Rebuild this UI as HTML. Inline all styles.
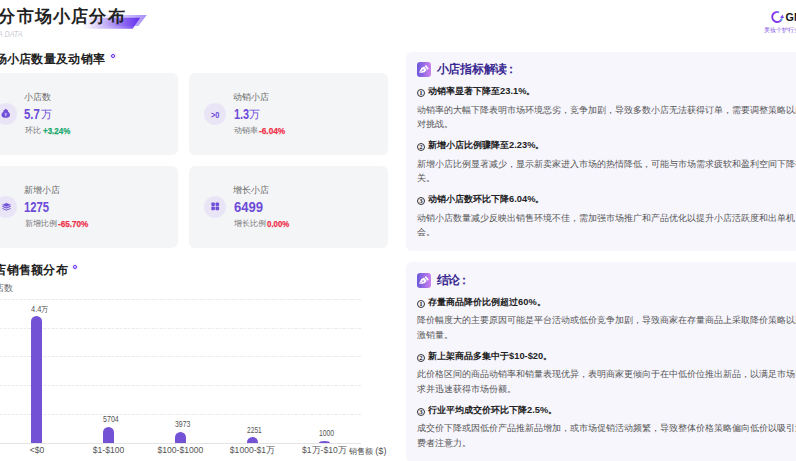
<!DOCTYPE html>
<html><head><meta charset="utf-8">
<style>
*{margin:0;padding:0;box-sizing:border-box}
html,body{width:796px;height:461px;overflow:hidden;background:#fff;font-family:"Liberation Sans",sans-serif;color:#333}
.a{position:absolute;white-space:nowrap;line-height:1}
.sx{display:inline-block;transform-origin:0 0}
.title{left:-19.8px;top:9px;font-size:16.6px;letter-spacing:1.2px;font-weight:bold;color:#222}
.h2{font-size:12px;letter-spacing:.3px;font-weight:bold;color:#222}
.ring{position:absolute;width:4.6px;height:4.6px;border:1.6px solid #5a22f5;border-radius:50%;box-shadow:0 0 2.5px rgba(90,34,245,.35)}
.card{position:absolute;width:198.4px;height:82.4px;background:#f4f5f7;border-radius:6px}
.ic{position:absolute;left:14.8px;top:29.9px;width:22.2px;height:22.2px;border-radius:50%;background:#e9e5f7}
.ic svg{position:absolute;left:0;top:0}
.lbl{position:absolute;left:44.2px;top:19.9px;font-size:9px;color:#666;line-height:1;white-space:nowrap}
.num{position:absolute;left:44.3px;top:33.4px;font-size:15.2px;font-weight:bold;color:#6c4bd8;line-height:1;white-space:nowrap}
.wan{position:absolute;top:35.8px;font-size:10.6px;color:#6c4bd8;line-height:1}
.cmp{position:absolute;left:44.7px;top:54px;font-size:8.2px;color:#777;line-height:1;white-space:nowrap}
.pct{position:absolute;top:53.4px;font-size:9.6px;font-weight:bold;-webkit-text-stroke:.25px currentColor;line-height:1;white-space:nowrap}
.green{color:#17a86c}.red{color:#f0304a}
.panel{position:absolute;left:406px;width:420px;background:#f7f6fd;border-radius:6px}
.pic{position:absolute;left:11px;width:14.3px;height:14.3px;border-radius:3.2px;background:linear-gradient(90deg,#6a58dc,#cc80f0)}
.ptitle{position:absolute;left:30.8px;font-size:11.5px;letter-spacing:-.3px;font-weight:bold;color:#3a2890;line-height:1;white-space:nowrap}
.hd{position:absolute;left:10.8px;padding-left:11.3px;font-size:9.3px;font-weight:bold;color:#222;line-height:1;white-space:nowrap}
.cn{position:absolute;left:.1px;top:1.5px;width:8.3px;height:8.3px;border:.85px solid #333;border-radius:50%;font-family:"Liberation Serif",serif;font-weight:bold;font-size:6.8px;line-height:6.6px;text-align:center;color:#222}
.bd{position:absolute;left:10.8px;width:390px;font-size:9px;color:#555;line-height:14.6px}
.grid{position:absolute;left:0;width:360.5px;height:1px;background:repeating-linear-gradient(90deg,#ebebeb 0 1.8px,transparent 1.8px 2.67px)}
.bar{position:absolute;width:10.9px;background:#7352d6;border-radius:5.45px 5.45px 0 0}
.bl{position:absolute;font-size:8.3px;color:#555;line-height:1;white-space:nowrap}
.xl{position:absolute;font-size:8.6px;color:#555;line-height:1;white-space:nowrap;text-align:center;width:80px}
</style></head><body>

<!-- header -->
<svg class="a" style="left:80px;top:13px" width="70" height="18" viewBox="0 0 70 18">
  <defs><linearGradient id="g1" x1="0" x2="1" y1="0" y2="0"><stop offset="0" stop-color="#7a4ef0" stop-opacity="0"/><stop offset=".55" stop-color="#7a4ef0" stop-opacity=".55"/><stop offset="1" stop-color="#6530ee"/></linearGradient>
  <linearGradient id="g1b" x1="0" x2="1" y1="0" y2="0"><stop offset="0" stop-color="#a58cf4" stop-opacity="0"/><stop offset=".5" stop-color="#a58cf4" stop-opacity=".5"/><stop offset="1" stop-color="#a78ef6"/></linearGradient></defs>
  <polygon points="20,1.9 66.8,1.9 58.3,12.9 20,12.9" fill="url(#g1b)"/>
  <polygon points="2.4,4.7 60.2,4.7 52.7,15.7 2.4,15.7" fill="url(#g1)"/>
</svg>
<div class="a title">细分市场小店分布</div>
<div class="a" style="left:-2.5px;top:29.9px;font-size:8.5px;font-style:italic;color:#cbcbd4"><span class="sx" style="transform:scaleX(.84)">A DATA</span></div>

<!-- logo -->
<svg class="a" style="left:770px;top:10px" width="15" height="15" viewBox="0 0 15 15">
  <defs><linearGradient id="g2" gradientUnits="userSpaceOnUse" x1="12" y1="9" x2="3" y2="12"><stop offset="0" stop-color="#4fb4f2"/><stop offset=".3" stop-color="#8a3cf0"/><stop offset="1" stop-color="#7a34e6"/></linearGradient></defs>
  <path d="M9.2 2.3 A5.05 5.05 0 1 0 12.1 8.3" fill="none" stroke="url(#g2)" stroke-width="1.9"/>
  <polygon points="10.1,7.9 14,7.9 12.4,4.4" fill="#7a48ee"/>
</svg>
<div class="a" style="left:785.5px;top:12.3px;font-size:10.8px;font-weight:bold;color:#111">GMV</div>
<div class="a" style="left:763.8px;top:27.4px;font-size:6.2px;color:#7a46e2">美妆个护行业</div>

<!-- section 1 -->
<div class="a h2" style="left:-5.5px;top:53px">场小店数量及动销率</div>
<div class="ring" style="left:110.7px;top:53.8px"></div>

<div class="card" style="left:-20.2px;top:72.8px">
  <div class="ic"><svg style="left:-.5px;top:-.9px" width="22.2" height="22.2" viewBox="0 0 22 22"><circle cx="11.65" cy="7.5" r=".9" fill="#7050d8"/><path d="M9.3 8.3 Q11.65 7 14 8.3 L13.9 9.7 C15.6 10.6 16 12.1 15.8 13.4 C15.6 15.1 13.9 15.7 11.65 15.7 C9.4 15.7 7.7 15.1 7.5 13.4 C7.3 12.1 7.7 10.6 9.4 9.7 Z" fill="#7050d8"/><path d="M10.7 10.8 L11.65 12.2 L12.6 10.8 M11.65 12.2 V14.3 M10.8 12.7 H12.5" stroke="#d9d0f5" stroke-width=".75" fill="none"/></svg></div>
  <div class="lbl">小店数</div>
  <div class="num"><span class="sx" style="transform:scaleX(.75)">5.7</span></div>
  <div class="wan" style="left:61.6px">万</div>
  <div class="cmp">环比</div>
  <div class="pct green" style="left:62.7px"><span class="sx" style="transform:scaleX(.83)">+3.24%</span></div>
</div>

<div class="card" style="left:189.3px;top:72.8px">
  <div class="ic"><div style="position:absolute;left:6.6px;top:7.1px;font-size:9.5px;font-weight:bold;color:#6c4bd8;line-height:1;transform:scaleX(.78);transform-origin:0 0">&gt;0</div></div>
  <div class="lbl">动销小店</div>
  <div class="num"><span class="sx" style="transform:scaleX(.72)">1.3</span></div>
  <div class="wan" style="left:60.2px">万</div>
  <div class="cmp">动销率</div>
  <div class="pct red" style="left:69.8px"><span class="sx" style="transform:scaleX(.86)">-6.04%</span></div>
</div>

<div class="card" style="left:-20.2px;top:165.8px">
  <div class="ic"><svg width="22.2" height="22.2" viewBox="0 0 22 22"><path d="M7.3 8.8 L11.4 7.1 L15.5 8.8 L11.4 10.4 Z" fill="#7050d8" stroke="#7050d8" stroke-width=".4" stroke-linejoin="round"/><path d="M7.7 10.4 L11.4 11.9 L15.1 10.4 M7.7 12.5 L11.4 14 L15.1 12.5" stroke="#7050d8" stroke-width="1" fill="none" stroke-linecap="round" stroke-linejoin="round"/></svg></div>
  <div class="lbl">新增小店</div>
  <div class="num"><span class="sx" style="transform:scaleX(.74)">1275</span></div>
  <div class="cmp">新增比例</div>
  <div class="pct red" style="left:78.4px"><span class="sx" style="transform:scaleX(.85)">-65.70%</span></div>
</div>

<div class="card" style="left:189.3px;top:165.8px">
  <div class="ic"><svg width="22" height="22" viewBox="0 0 22 22"><rect x="7.3" y="6.4" width="3.6" height="3.6" rx="1" fill="#7050d8"/><rect x="11.5" y="6.4" width="3.6" height="3.6" rx="1" fill="#7050d8"/><rect x="7.3" y="10.6" width="3.6" height="3.6" rx="1" fill="#7050d8"/><rect x="11.5" y="10.6" width="3.6" height="3.6" rx="1" fill="#7050d8"/></svg></div>
  <div class="lbl">增长小店</div>
  <div class="num"><span class="sx" style="transform:scaleX(.86)">6499</span></div>
  <div class="cmp">增长比例</div>
  <div class="pct red" style="left:78.1px"><span class="sx" style="transform:scaleX(.82)">0.00%</span></div>
</div>

<!-- section 2 chart -->
<div class="a h2" style="left:-18px;top:264px">小店销售额分布</div>
<div class="ring" style="left:72.7px;top:264.7px"></div>
<div class="a" style="left:-13.6px;top:284.2px;font-size:8.7px;color:#666">小店数</div>

<div class="grid" style="top:299px"></div>
<div class="grid" style="top:327.7px"></div>
<div class="grid" style="top:356.4px"></div>
<div class="grid" style="top:385.1px"></div>
<div class="grid" style="top:413.8px"></div>
<div class="a" style="left:0;top:443px;width:360.5px;height:1px;background:#e4e4e4"></div>

<div class="bar" style="left:31.1px;top:316px;height:127px"></div>
<div class="bar" style="left:103.1px;top:427px;height:16px"></div>
<div class="bar" style="left:175px;top:432px;height:11px"></div>
<div class="bar" style="left:247.2px;top:437px;height:6px"></div>
<div class="bar" style="left:318.9px;top:441px;height:2px;border-radius:5.45px 5.45px 0 0/2px 2px 0 0"></div>

<div class="bl" style="left:31px;top:304.6px"><span class="sx" style="transform:scaleX(.9)">4.4万</span></div>
<div class="bl" style="left:102.8px;top:415.4px"><span class="sx" style="transform:scaleX(.856)">5704</span></div>
<div class="bl" style="left:175px;top:420.1px"><span class="sx" style="transform:scaleX(.83)">3973</span></div>
<div class="bl" style="left:247.2px;top:425.8px"><span class="sx" style="transform:scaleX(.8)">2251</span></div>
<div class="bl" style="left:318.6px;top:429.3px"><span class="sx" style="transform:scaleX(.82)">1000</span></div>

<div class="xl" style="left:-3px;top:446px">&lt;$0</div>
<div class="xl" style="left:68.6px;top:446px">$1-$100</div>
<div class="xl" style="left:140.4px;top:446px">$100-$1000</div>
<div class="xl" style="left:212.5px;top:446px">$1000-$1万</div>
<div class="xl" style="left:284.4px;top:446px">$1万-$10万</div>
<div class="a" style="left:349px;top:446.6px;font-size:8.1px;color:#555">销售额 <span style="font-size:9.2px">($)</span></div>

<!-- panel 1 -->
<div class="panel" style="top:52px;height:198.7px">
  <div class="pic" style="top:10.4px"><svg width="14.3" height="14.3" viewBox="0 0 14 14"><g transform="translate(-1.1 .9) rotate(54 7 7) translate(7 7) scale(.9) translate(-7 -7)"><rect x="4.5" y="1.1" width="5" height="1.8" rx=".3" fill="#fff"/><path d="M4.6 3.8 H9.4 L9.9 7.2 Q8.6 9.8 7 12.6 Q5.4 9.8 4.1 7.2 Z" fill="#fff"/><circle cx="7" cy="6.9" r=".85" fill="#9a6ce6"/><path d="M7 7.6 V12.8" stroke="#9a6ce6" stroke-width=".55"/></g></svg></div>
  <div class="ptitle" style="top:11.6px">小店指标解读<span style="margin-left:-1.8px">：</span></div>
  <div class="hd" style="top:35px"><span class="cn">1</span>动销率显著下降至23.1%。</div>
  <div class="bd" style="top:50.5px">动销率的大幅下降表明市场环境恶劣，竞争加剧，导致多数小店无法获得订单，需要调整策略以应对挑战。</div>
  <div class="hd" style="top:89px"><span class="cn">2</span>新增小店比例骤降至2.23%。</div>
  <div class="bd" style="top:104.5px">新增小店比例显著减少，显示新卖家进入市场的热情降低，可能与市场需求疲软和盈利空间下降有关。</div>
  <div class="hd" style="top:143px"><span class="cn">3</span>动销小店数环比下降6.04%。</div>
  <div class="bd" style="top:158.5px">动销小店数量减少反映出销售环境不佳，需加强市场推广和产品优化以提升小店活跃度和出单机会。</div>
</div>

<!-- panel 2 -->
<div class="panel" style="top:262.2px;height:200px">
  <div class="pic" style="top:11.1px"><svg width="14.3" height="14.3" viewBox="0 0 14 14"><g transform="translate(-1.1 .9) rotate(54 7 7) translate(7 7) scale(.9) translate(-7 -7)"><rect x="4.5" y="1.1" width="5" height="1.8" rx=".3" fill="#fff"/><path d="M4.6 3.8 H9.4 L9.9 7.2 Q8.6 9.8 7 12.6 Q5.4 9.8 4.1 7.2 Z" fill="#fff"/><circle cx="7" cy="6.9" r=".85" fill="#9a6ce6"/><path d="M7 7.6 V12.8" stroke="#9a6ce6" stroke-width=".55"/></g></svg></div>
  <div class="ptitle" style="top:12.6px">结论<span style="margin-left:-1.8px">：</span></div>
  <div class="hd" style="top:36px"><span class="cn">1</span>存量商品降价比例超过60%。</div>
  <div class="bd" style="top:51px">降价幅度大的主要原因可能是平台活动或低价竞争加剧，导致商家在存量商品上采取降价策略以刺激销量。</div>
  <div class="hd" style="top:90px"><span class="cn">2</span>新上架商品多集中于$10-$20。</div>
  <div class="bd" style="top:105px">此价格区间的商品动销率和销量表现优异，表明商家更倾向于在中低价位推出新品，以满足市场需求并迅速获得市场份额。</div>
  <div class="hd" style="top:144px"><span class="cn">3</span>行业平均成交价环比下降2.5%。</div>
  <div class="bd" style="top:159px">成交价下降或因低价产品推新品增加，或市场促销活动频繁，导致整体价格策略偏向低价以吸引消费者注意力。</div>
</div>

</body></html>
